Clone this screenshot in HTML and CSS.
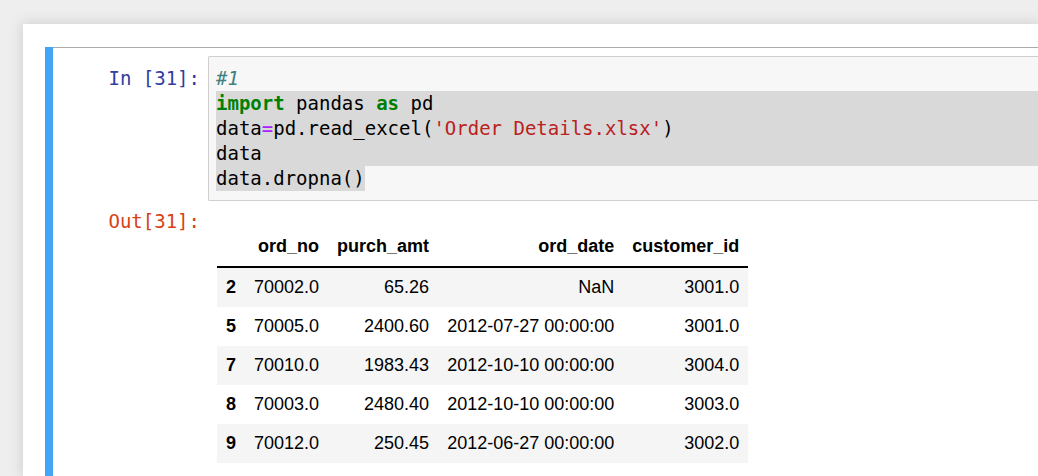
FILE: index.html
```html
<!DOCTYPE html>
<html>
<head>
<meta charset="utf-8">
<link rel="stylesheet" href="styles.css">
</head>
<body>
<div class="notebook">
  <div class="cell">
    <div class="cell-inner">
      <div class="input-row">
        <div class="prompt in-prompt">In&nbsp;[31]:</div>
        <div class="code-box">
          <div class="line"><span class="cm">#1</span></div>
          <div class="line sel"><span class="kw">import</span> pandas <span class="kw">as</span> pd</div>
          <div class="line sel">data<span class="op">=</span>pd.read_excel(<span class="str">'Order Details.xlsx'</span>)</div>
          <div class="line sel">data</div>
          <div class="line"><span class="sel-inline">data.dropna()</span></div>
        </div>
      </div>
      <div class="output-row">
        <div class="prompt out-prompt">Out[31]:</div>
        <div class="output-area">
          <table class="df">
            <thead>
              <tr><th></th><th>ord_no</th><th>purch_amt</th><th>ord_date</th><th>customer_id</th></tr>
            </thead>
            <tbody>
              <tr><th>2</th><td>70002.0</td><td>65.26</td><td>NaN</td><td>3001.0</td></tr>
              <tr><th>5</th><td>70005.0</td><td>2400.60</td><td>2012-07-27 00:00:00</td><td>3001.0</td></tr>
              <tr><th>7</th><td>70010.0</td><td>1983.43</td><td>2012-10-10 00:00:00</td><td>3004.0</td></tr>
              <tr><th>8</th><td>70003.0</td><td>2480.40</td><td>2012-10-10 00:00:00</td><td>3003.0</td></tr>
              <tr><th>9</th><td>70012.0</td><td>250.45</td><td>2012-06-27 00:00:00</td><td>3002.0</td></tr>
            </tbody>
          </table>
        </div>
      </div>
    </div>
  </div>
</div>
</body>
</html>
```

FILE: styles.css
```css
html, body {
  margin: 0;
  padding: 0;
  background: #eeeeee;
  overflow: hidden;
  width: 1038px;
  height: 476px;
}

.notebook {
  margin: 24px 0 0 23px;
  width: 1015px;
  height: 452px;
  background: #ffffff;
  box-shadow: 0 0 12px 1px rgba(87, 87, 87, 0.2);
  padding: 23px 0 0 22px;
  box-sizing: border-box;
  overflow: hidden;
}

.cell {
  border-left: 8px solid #42a5f5;
  height: 429px;
}

.cell-inner {
  border-top: 1px solid #ababab;
  padding-top: 8px;
}

.input-row,
.output-row {
  display: flex;
  align-items: flex-start;
}

.prompt {
  width: 147px;
  padding-right: 8px;
  text-align: right;
  font-family: "DejaVu Sans Mono", monospace;
  font-size: 19px;
  line-height: 25px;
  flex: none;
  white-space: nowrap;
}

.in-prompt {
  color: #303f9f;
  padding-top: 10px;
}

.out-prompt {
  color: #d84315;
}

.code-box {
  flex: 1;
  min-width: 0;
  border: 1px solid #cfcfcf;
  border-right: none;
  border-radius: 2px 0 0 2px;
  background: #f7f7f7;
  padding: 9px 0 9px 7px;
  font-family: "DejaVu Sans Mono", monospace;
  font-size: 19px;
  color: #000;
}

.line {
  line-height: 25px;
  height: 25px;
  white-space: pre;
}

.sel {
  background: #d9d9d9;
}

.sel-inline {
  display: inline-block;
  background: #d9d9d9;
  line-height: 25px;
}

.cm {
  color: #408080;
  font-style: italic;
}

.kw {
  color: #008000;
  font-weight: bold;
}

.op {
  color: #aa22ff;
}

.str {
  color: #ba2121;
}

.output-row {
  margin-top: 8px;
}

.output-area {
  padding: 18px 0 0 9px;
}

.df {
  border-collapse: collapse;
  border: none;
  font-family: "Liberation Sans", Arial, sans-serif;
  font-size: 18px;
  color: #000;
}

.df th,
.df td {
  padding: 9px;
  line-height: 21px;
  text-align: right;
  vertical-align: middle;
  white-space: nowrap;
}

.df th {
  font-weight: bold;
}

.df thead th {
  border-bottom: 2px solid #000;
}

.df tbody tr:nth-child(odd) {
  background: #f5f5f5;
}
```
